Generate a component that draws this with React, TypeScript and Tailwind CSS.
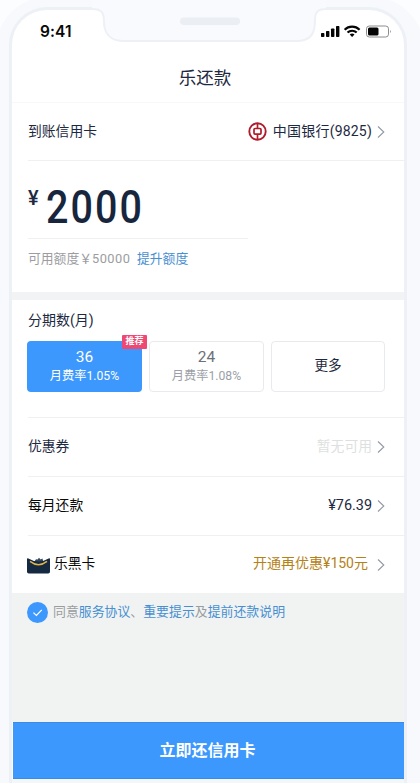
import React from "react";

function Chevron() {
  return (
    <svg className="h-[14px] w-[8px] shrink-0" viewBox="0 0 8 14" fill="none">
      <path d="M1 1.5 L6.8 7 L1 12.5" stroke="#9298a3" strokeWidth="1.1" />
    </svg>
  );
}

function PhoneTop() {
  return (
    <svg className="pointer-events-none absolute left-0 top-0 h-[60px] w-[420px]" viewBox="0 0 420 60" fill="none">
      <path
        d="M92 0 H326 V9 C318 9 315 12 315 20 C315 32 312 40 299 41 H124 C111 41 104 34 104 22 C104 13 102 9 92 9 Z"
        fill="#f8fafd"
      />
      <path
        d="M92 9 C102 9 104 13 104 22 C104 34 111 41 124 41 H299 C312 40 315 32 315 20 C315 12 318 9 326 9"
        stroke="#edf1f5"
        strokeWidth="2"
      />
      <rect x="180" y="17.5" width="60" height="7.5" rx="3.75" fill="#ebeff4" />
    </svg>
  );
}

function StatusBar() {
  return (
    <div className="flex h-[42px] items-start justify-between pl-[28px] pr-[12px] pt-[12px]">
      <span className="font-['Inter'] text-[15.5px] font-semibold leading-[20px] tracking-[0.1px] text-[#090909]">9:41</span>
      <svg className="mt-[2px] h-[14px] w-[72px]" viewBox="0 0 72 14">
        <g fill="#050505">
          <rect x="1" y="9" width="3.4" height="4" rx="0.8" />
          <rect x="6" y="7" width="3.4" height="6" rx="0.8" />
          <rect x="11" y="4.5" width="3.4" height="8.5" rx="0.8" />
          <rect x="16" y="2" width="3.4" height="11" rx="0.8" />
          <path d="M32.1 13 L34.5 10.6 A3.4 3.4 0 0 0 29.7 10.6 Z" />
        </g>
        <g fill="none" stroke="#050505" strokeWidth="2.1">
          <path d="M27.5 8.6 A6.5 6.5 0 0 1 36.7 8.6" />
          <path d="M24.6 5.7 A10.6 10.6 0 0 1 39.6 5.7" />
        </g>
        <rect x="46.5" y="2" width="22" height="11" rx="2.8" fill="none" stroke="#8c8c8c" />
        <rect x="48" y="3.5" width="10.5" height="8" rx="1.5" fill="#050505" />
        <path d="M70 5.8 Q71.8 7.5 70 9.2 Z" fill="#8c8c8c" />
      </svg>
    </div>
  );
}

function BankLogo() {
  return (
    <svg className="h-[19px] w-[19px]" viewBox="0 0 19 19" fill="none" stroke="#b01c2b">
      <circle cx="9.5" cy="9.5" r="8.2" strokeWidth="1.9" />
      <rect x="6" y="6.5" width="7" height="5.6" rx="1" strokeWidth="1.7" />
      <path d="M9.5 1.5 V6.4 M9.5 12.3 V17.5" strokeWidth="1.7" />
    </svg>
  );
}

function BlackCard() {
  return (
    <svg className="ml-[-1px] mt-[2px] h-[17px] w-[23px]" viewBox="0 0 23 17">
      <path d="M7 5 L9 2.2 L10.6 2.4 L12 0.8 L13.6 2.4 L15.4 1.6 L16.5 5 L12 8 Z" fill="#33465a" />
      <path d="M0 2 Q0 0.8 1.4 1.4 Q11.5 7.6 21.6 1.4 Q23 0.8 23 2 V14.7 Q23 16.5 21.2 16.5 H1.8 Q0 16.5 0 14.7 Z" fill="#152941" />
      <path d="M3 4.4 Q11.5 11 20 4.4" fill="none" stroke="#dfb44a" strokeWidth="1.5" />
    </svg>
  );
}

export default function App() {
  return (
    <div className="relative h-[783px] w-[420px] overflow-hidden bg-[#fcfdfe] font-['Roboto','Noto_Sans_CJK_SC',sans-serif] text-[#1d2941]">
      <div className="ml-[-4px] mt-[-3px] h-[800px] w-[428px] rounded-t-[52px] bg-[#f7f9fc] pl-[13px] pt-[10px]">
        <div className="h-[790px] w-[398px] overflow-hidden rounded-t-[38px] border-[3px] border-b-0 border-[#edf1f6] bg-white">
          <StatusBar />
          <header className="flex h-[51px] items-center justify-center border-b border-[#f7f8f9] pr-[6px] pt-[2px] text-[17.5px] leading-[24px]">乐还款</header>

          <div className="ml-[16px] flex h-[58px] items-center border-b border-[#eff0f2] pr-[19px] text-[13.8px]">
            <span>到账信用卡</span>
            <div className="ml-auto flex items-center">
              <BankLogo />
              <span className="ml-[6px] mr-[5px] text-[14px] tracking-[0.2px]">中国银行(9825)</span>
              <Chevron />
            </div>
          </div>

          <section className="h-[131px] px-[16px]">
            <div className="flex h-[78px] w-[220px] border-b border-[#eff0f2]">
              <span className="mt-[25px] w-[18px] text-[20px] font-medium leading-[24px]">¥</span>
              <span className="mt-[20px] origin-left scale-x-[0.84] text-[47px] font-medium leading-[52px] tracking-[2.5px] text-[#18263d]">2000</span>
            </div>
            <div className="mt-[11px] flex text-[12.8px] leading-[18px]">
              <span className="w-[109px] whitespace-nowrap text-[#9b9da1]">可用额度￥<span className="tracking-[0.5px]">50000</span></span>
              <span className="text-[#478fd0]">提升额度</span>
            </div>
          </section>

          <div className="h-[8px] bg-[#f2f3f4]" />

          <section className="h-[117px] pt-[10px]">
            <h2 className="ml-[16px] text-[14px] leading-[20px]">分期数(月)</h2>
            <div className="ml-[15px] mt-[11px] flex gap-[7px] text-center">
              <div className="relative h-[51px] w-[115px] rounded-[4px] bg-[#3c98fc] pt-[7px] text-white">
                <div className="text-[15.5px] leading-[19px]">36</div>
                <div className="text-[12.2px] leading-[18px]">月费率1.05%</div>
                <span className="absolute right-[-5px] top-[-6px] h-[14px] w-[25px] rounded-[1px] bg-[#ee4873] text-[9px] font-bold leading-[13px]">推荐</span>
              </div>
              <div className="h-[51px] w-[115px] rounded-[4px] border border-[#e9eaed] pt-[6px]">
                <div className="text-[15.5px] leading-[19px] text-[#6c7079]">24</div>
                <div className="text-[12.2px] leading-[18px] text-[#9b9fa8]">月费率1.08%</div>
              </div>
              <div className="h-[51px] w-[114px] rounded-[4px] border border-[#e9eaed] pt-[13px] text-[13.6px] leading-[20px]">更多</div>
            </div>
          </section>

          <div className="ml-[16px] flex h-[59px] items-center border-t border-[#eff0f2] pb-px pr-[19px] text-[13.8px]">
            <span>优惠券</span>
            <span className="ml-auto mr-[5px] text-[#dedfe0]">暂无可用</span>
            <Chevron />
          </div>
          <div className="ml-[16px] flex h-[59px] items-center border-t border-[#eff0f2] pb-px pr-[19px] text-[13.8px]">
            <span className="text-[#090909]">每月还款</span>
            <span className="ml-auto mr-[5px] text-[14.4px]">¥76.39</span>
            <Chevron />
          </div>
          <div className="ml-[16px] flex h-[58px] items-center border-t border-[#eff0f2] pr-[19px] text-[13.8px]">
            <BlackCard />
            <span className="mb-[3px] ml-[4px] text-[#090909]">乐黑卡</span>
            <span className="mb-[3px] ml-auto mr-[9px] text-[14px] text-[#b58219]">开通再优惠¥150元</span>
            <Chevron />
          </div>

          <div className="h-[129px] bg-[#f1f3f3] pl-[15px] pt-[9px]">
            <div className="flex text-[12.9px] leading-[19px] text-[#999da0]">
              <svg className="mr-[5px] h-[21px] w-[21px]" viewBox="0 0 21 21" fill="none">
                <circle cx="10.5" cy="10.5" r="10.5" fill="#3c98fc" />
                <path d="M6.4 10.6 L9.4 13.4 L14.8 7.9" stroke="white" strokeWidth="1.2" />
              </svg>
              <p>
                同意<span className="text-[#478fd0]">服务协议</span>、<span className="text-[#478fd0]">重要提示</span>及<span className="text-[#478fd0]">提前还款说明</span>
              </p>
            </div>
          </div>

          <button className="ml-px block h-[57px] w-[391px] border-y border-[#398be6] bg-[#3c98fc] pr-[2px] text-[16px] font-bold text-white">立即还信用卡</button>
          <div className="h-[20px] bg-[#f4f7fa]" />
        </div>
      </div>
      <PhoneTop />
    </div>
  );
}
